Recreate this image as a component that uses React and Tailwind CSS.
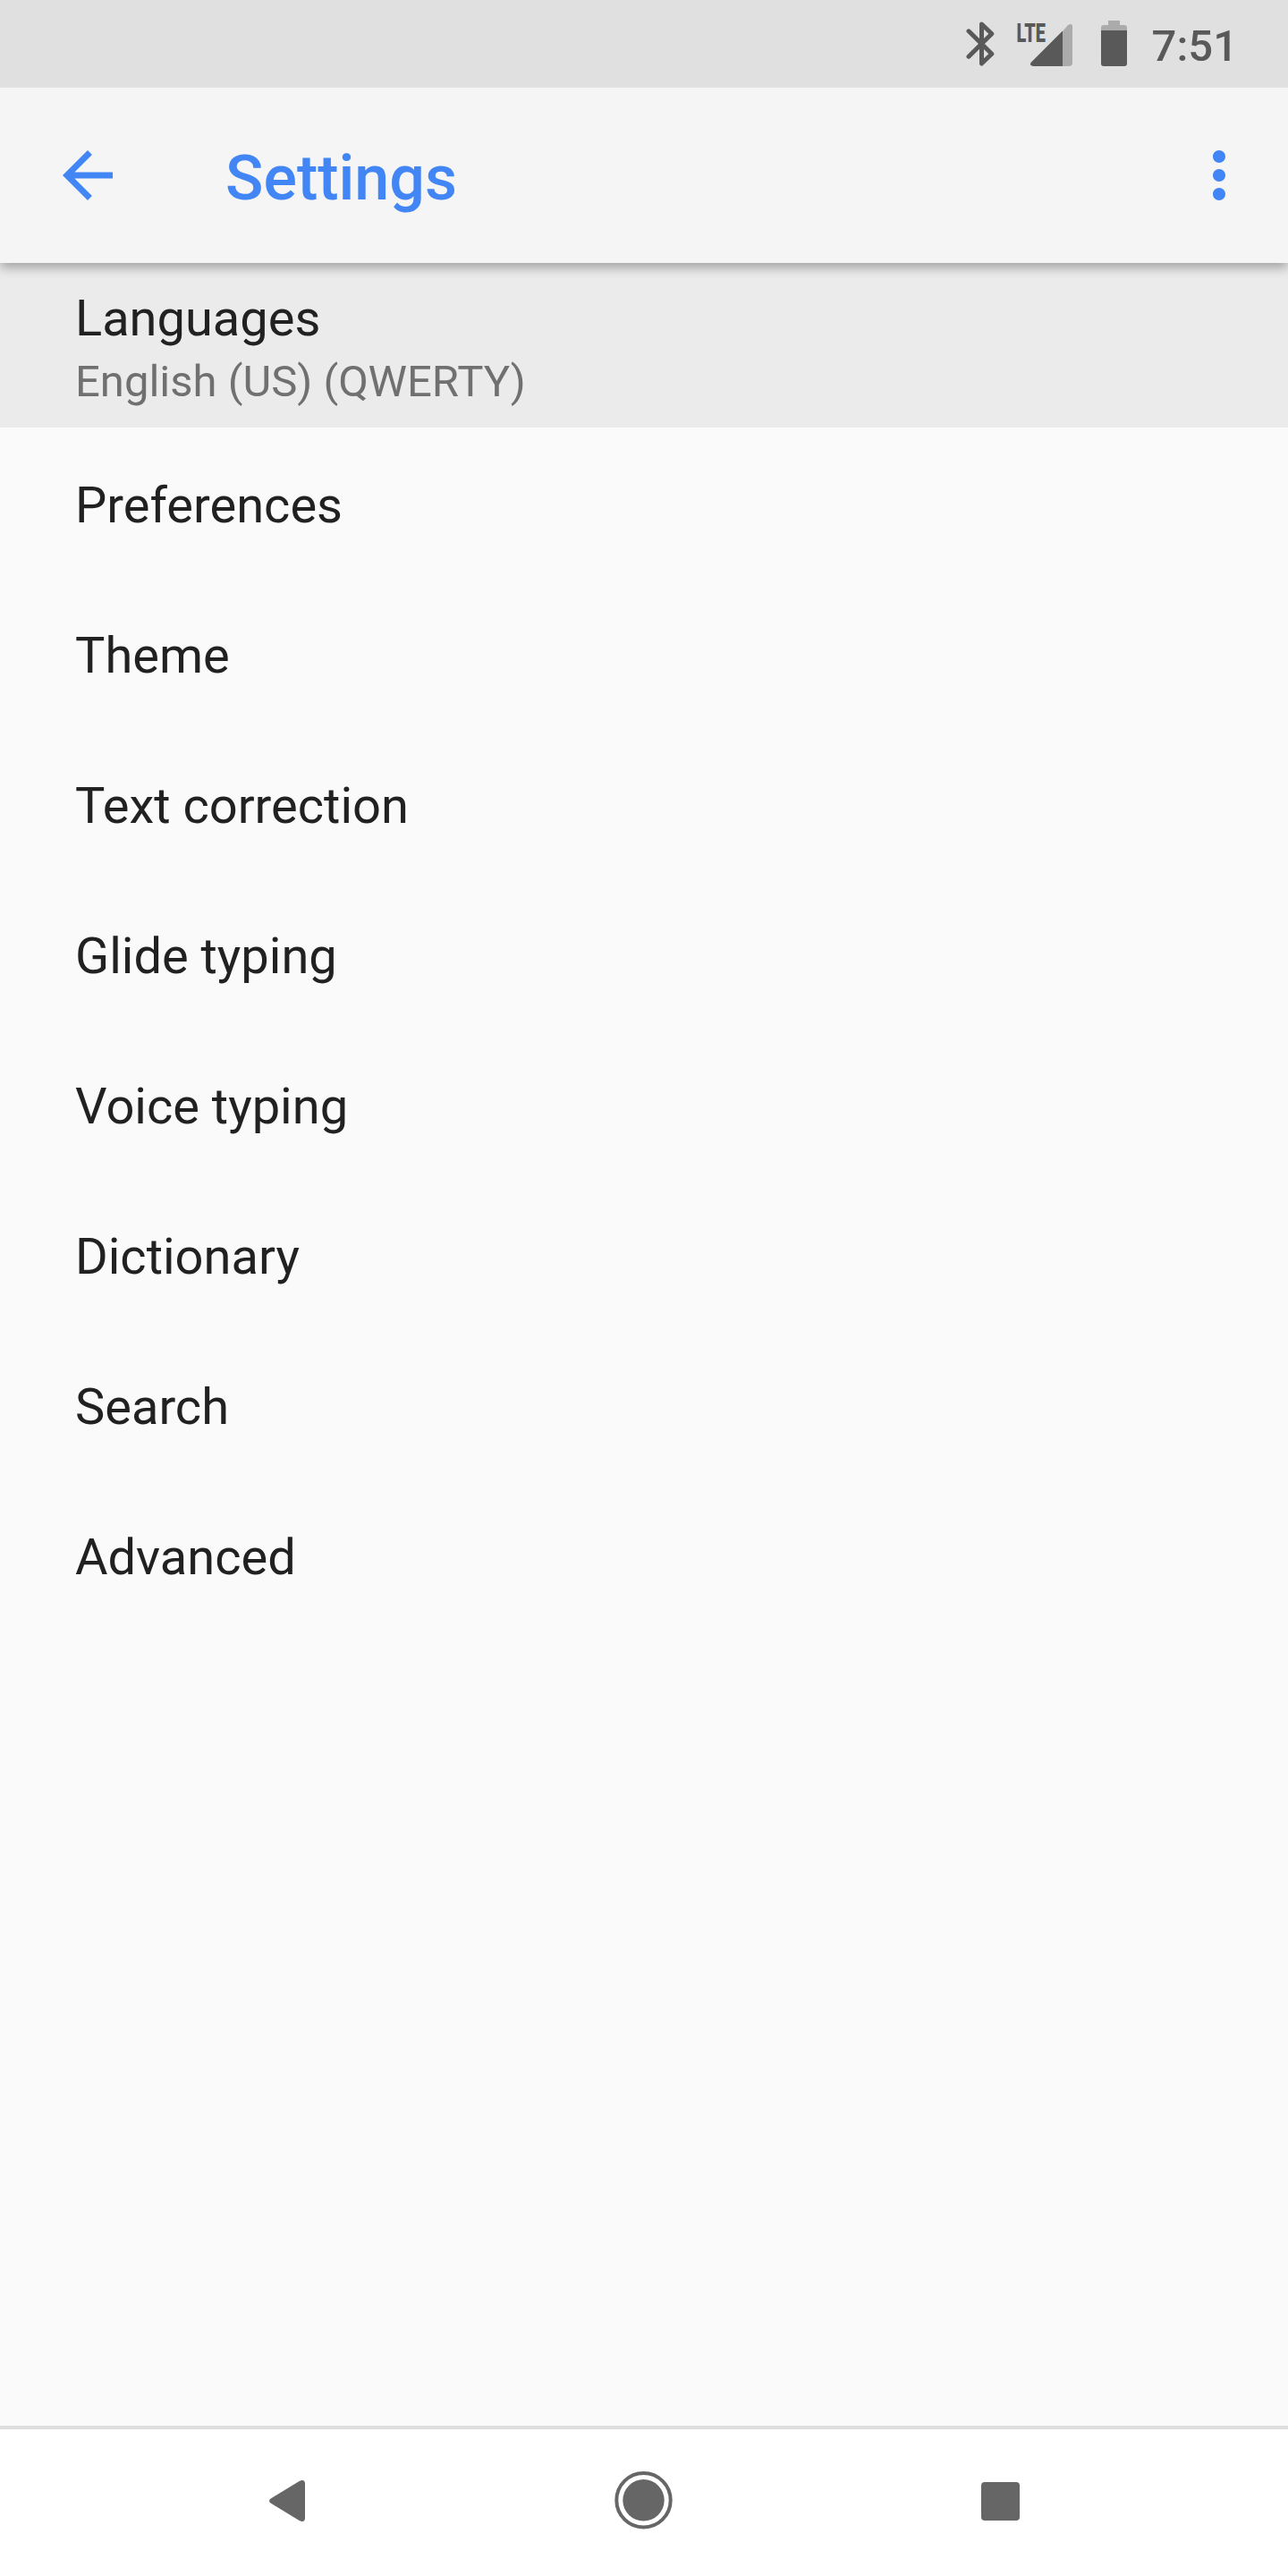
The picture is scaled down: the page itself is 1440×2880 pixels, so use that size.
import React from "react";

const ITEMS = [
  "Preferences",
  "Theme",
  "Text correction",
  "Glide typing",
  "Voice typing",
  "Dictionary",
  "Search",
  "Advanced",
];

function StatusBar() {
  return (
    <div className="relative z-20 flex h-[98px] items-center justify-end bg-[#e0e0e0] pr-[56px] text-[#595959]">
      <svg className="h-[50px] w-[32px]" viewBox="0 0 32 50" fill="none">
        <path
          d="M3 10.8L28.8 36.2L17.5 47V3L28.8 13.8L3 39.2"
          stroke="currentColor"
          strokeWidth="5"
          strokeLinecap="round"
          strokeLinejoin="round"
        />
      </svg>
      <svg className="ml-[21px] h-[64px] w-[66px]" viewBox="-4 -7 66 64">
        <path d="M51 11L57 4Q62 1 62 6V46Q62 50 58 50H51z" fill="#ababab" />
        <path d="M51 10.500V50H18Q13 49 16 45.500z" fill="currentColor" />
        <text
          x="-0.500"
          y="22.500"
          fontFamily="Roboto, sans-serif"
          fontWeight="900"
          fontSize="30"
          textLength="32.500"
          lengthAdjust="spacingAndGlyphs"
          fill="currentColor"
        >
          LTE
        </text>
      </svg>
      <svg className="ml-[32px] h-[52px] w-[29px]" viewBox="0 0 29 52">
        <path d="M8 0h13v5h5q3 0 3 3v4H0V8q0-3 3-3h5z" fill="#ababab" />
        <path d="M0 11h29v37q0 3-3 3H3q-3 0-3-3z" fill="currentColor" />
      </svg>
      <span className="ml-[28px] pt-[4px] text-[49px] font-medium leading-none">7:51</span>
    </div>
  );
}

function AppBar() {
  return (
    <header className="relative z-10 flex h-[196px] items-center bg-[#f5f5f5] text-[#4285f4] shadow-[0_5px_12px_rgba(0,0,0,0.32)]">
      <svg className="ml-[56px] h-[84px] w-[84px]" viewBox="0 0 24 24" fill="currentColor">
        <path d="M20 11H7.83l5.59-5.59L12 4l-8 8 8 8 1.41-1.41L7.83 13H20v-2z" />
      </svg>
      <h1 className="ml-[112px] pt-[6px] text-[70px] font-medium leading-none">Settings</h1>
      <svg className="mr-[35px] ml-auto h-[84px] w-[84px]" viewBox="0 0 24 24" fill="currentColor">
        <path d="M12 8c1.1 0 2-.9 2-2s-.9-2-2-2-2 .9-2 2 .9 2 2 2zm0 2c-1.1 0-2 .9-2 2s.9 2 2 2 2-.9 2-2-.9-2-2-2zm0 6c-1.1 0-2 .9-2 2s.9 2 2 2 2-.9 2-2-.9-2-2-2z" />
      </svg>
    </header>
  );
}

function NavBar() {
  return (
    <nav className="flex h-[168px] items-center border-t-4 border-[#dedede] bg-white pb-[4px] text-[#666]">
      <svg className="ml-[301px] h-[46px] w-[40px]" viewBox="0 0 40 46" fill="currentColor">
        <path d="M34 .8Q40-1.500 40 4V42Q40 47.500 34 45.200L2 25.800Q-2 23 2 20.200z" />
      </svg>
      <svg className="ml-[346px] h-[66px] w-[66px]" viewBox="0 0 66 66">
        <circle cx="32.500" cy="32.300" r="30.200" fill="none" stroke="currentColor" strokeWidth="4" />
        <circle cx="32.500" cy="32.300" r="23.200" fill="currentColor" />
      </svg>
      <div className="ml-[344px] h-[43px] w-[43px] rounded-[4px] bg-[#666]" />
    </nav>
  );
}

export default function App() {
  return (
    <div className="flex h-[2880px] w-[1440px] flex-col overflow-hidden bg-[#fafafa] font-['Roboto',sans-serif]">
      <StatusBar />
      <AppBar />
      <main className="flex-1 text-[#212121]">
        <div className="h-[184px] bg-[#ebebeb] px-[84px] pt-[29px]">
          <div className="text-[56px] leading-[66px]">Languages</div>
          <div className="mt-[9px] text-[49px] leading-[58px] text-[#707070]">English (US) (QWERTY)</div>
        </div>
        <ul>
          {ITEMS.map((item) => (
            <li key={item} className="flex h-[168px] items-center px-[84px] pt-[5px] text-[56px]">
              {item}
            </li>
          ))}
        </ul>
      </main>
      <NavBar />
    </div>
  );
}
